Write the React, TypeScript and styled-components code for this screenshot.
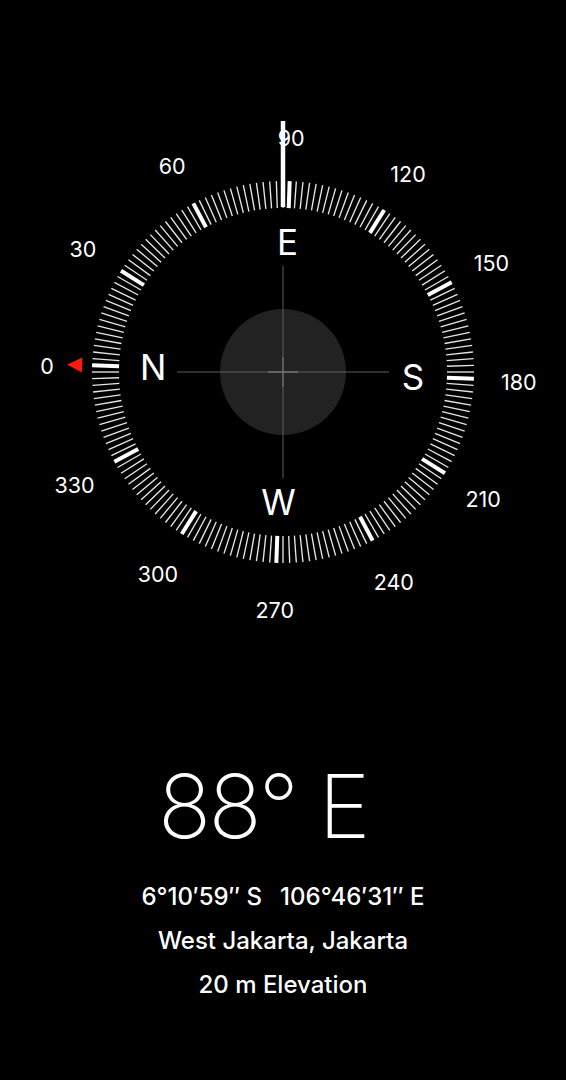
import React from "react";
import styled, { createGlobalStyle } from "styled-components";

const GlobalStyle = createGlobalStyle`
  html, body { margin: 0; padding: 0; background: #000; }
  body { font-family: Inter, "Noto Sans", "Liberation Sans", sans-serif; color: #fff; }
`;

const Page = styled.div`
  width: 566px;
  min-height: 1080px;
  background: #000;
  display: flex;
  flex-direction: column;
  align-items: center;
`;

const Dial = styled.svg`
  display: block;
  width: 566px;
  height: 640px;
`;

const Readout = styled.div`
  display: flex;
  flex-direction: column;
  align-items: center;
  padding-top: 122px;
`;

const Heading = styled.div`
  font-family: Inter, "Noto Sans", sans-serif;
  font-size: 88px;
  font-weight: 200;
  line-height: 1;
  letter-spacing: -2.5px;
  color: #fff;
  margin-bottom: 25px;
  margin-right: 40px;
`;

const InfoLine = styled.div`
  font-family: Inter, "Noto Sans", sans-serif;
  font-size: 24px;
  font-weight: 500;
  line-height: 44px;
  color: #fff;
  white-space: pre;
`;

const Gap = styled.span`
  display: inline-block;
  width: 18px;
`;

const CX = 283;
const CY = 372;
const HEADING = 88;

const pt = (bearing: number, r: number) => {
  const t = ((bearing - HEADING) * Math.PI) / 180;
  return { x: CX + r * Math.sin(t), y: CY - r * Math.cos(t) };
};

const ticks = Array.from({ length: 180 }, (_, i) => i * 2);
const numbers = [0, 30, 60, 90, 120, 150, 180, 210, 240, 270, 300, 330];
const cardinals: [string, number][] = [
  ["N", 0],
  ["E", 90],
  ["S", 180],
  ["W", 270],
];

export default function App() {
  const triTip = pt(0, 216);
  const triBase = 201;
  const t = ((0 - HEADING) * Math.PI) / 180;
  const bx = CX + triBase * Math.sin(t);
  const by = CY - triBase * Math.cos(t);
  const px = Math.cos(t) * 7.5;
  const py = Math.sin(t) * 7.5;

  return (
    <Page>
      <GlobalStyle />
      <Dial viewBox="0 0 566 640">
        <circle cx={CX} cy={CY} r={63} fill="#222" />
        <line x1={CX - 106} y1={CY} x2={CX + 106} y2={CY} stroke="#5c5c5c" strokeWidth={1} />
        <line x1={CX} y1={CY - 106} x2={CX} y2={CY + 106} stroke="#5c5c5c" strokeWidth={1} />
        <line x1={CX - 15} y1={CY} x2={CX + 15} y2={CY} stroke="#8a8a8a" strokeWidth={1} />
        <line x1={CX} y1={CY - 15} x2={CX} y2={CY + 15} stroke="#7a7a7a" strokeWidth={1} />

        {ticks.map((b) => {
          const major = b % 30 === 0;
          const a = pt(b, 164);
          const c = pt(b, 191);
          return (
            <line
              key={b}
              x1={a.x}
              y1={a.y}
              x2={c.x}
              y2={c.y}
              stroke="#fff"
              strokeOpacity={major ? 1 : 0.9}
              strokeWidth={major ? 4 : 1.35}
            />
          );
        })}

        <line x1={CX} y1={121} x2={CX} y2={207} stroke="#fff" strokeWidth={4.5} />

        <polygon
          points={`${triTip.x},${triTip.y} ${bx + px},${by + py} ${bx - px},${by - py}`}
          fill="#ff1a0d"
        />

        {numbers.map((b) => {
          const p = pt(b, 236);
          return (
            <text
              key={b}
              x={p.x}
              y={p.y + 2}
              textAnchor="middle"
              dominantBaseline="central"
              fill="#fff"
              fontFamily='Inter, "Noto Sans", sans-serif'
              fontSize={21.5}
              fontWeight={400}
            >
              {b}
            </text>
          );
        })}

        {cardinals.map(([l, b]) => {
          const p = pt(b, 130);
          return (
            <text
              key={l}
              x={p.x}
              y={p.y}
              textAnchor="middle"
              dominantBaseline="central"
              fill="#fff"
              fontFamily='Inter, "Noto Sans", sans-serif'
              fontSize={35}
              fontWeight={400}
            >
              {l}
            </text>
          );
        })}
      </Dial>

      <Readout>
        <Heading>88° E</Heading>
        <InfoLine>
          {"6°10′59″ S"}
          <Gap />
          {"106°46′31″ E"}
        </InfoLine>
        <InfoLine>West Jakarta, Jakarta</InfoLine>
        <InfoLine>20 m Elevation</InfoLine>
      </Readout>
    </Page>
  );
}
